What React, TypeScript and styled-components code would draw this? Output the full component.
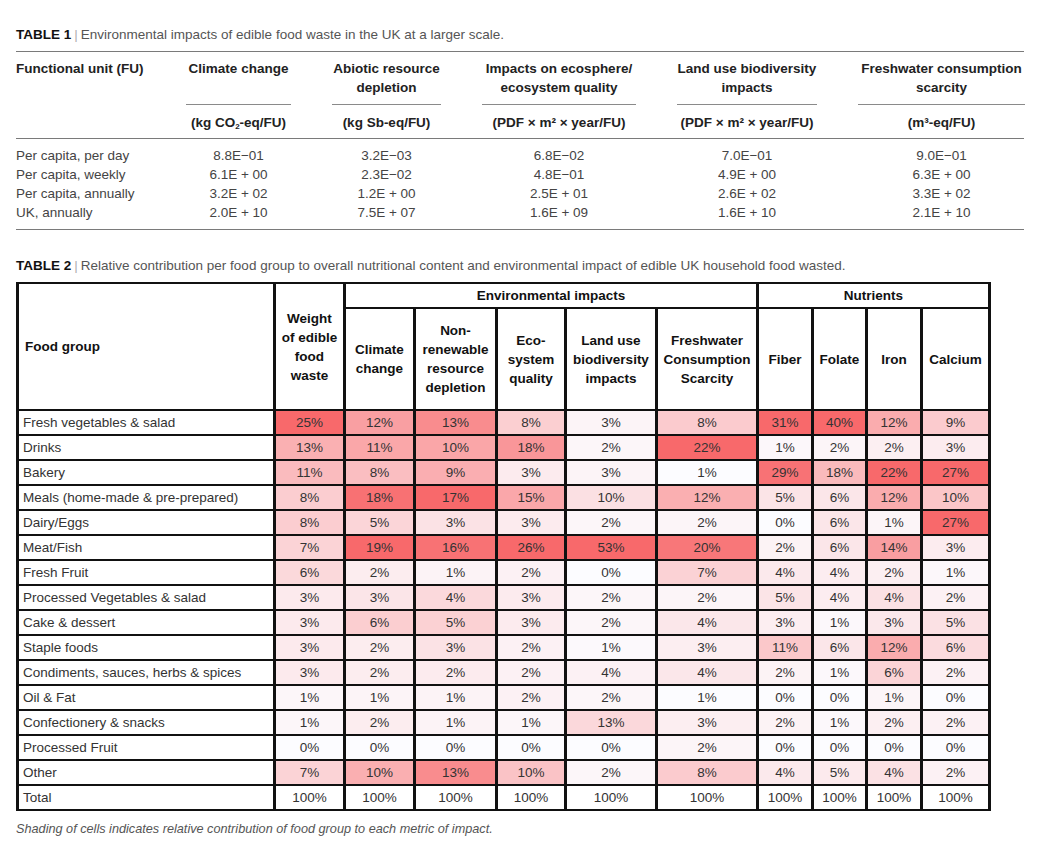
import React from "react";
import styled, { createGlobalStyle } from "styled-components";

const Global = createGlobalStyle`
  html, body { margin: 0; padding: 0; background: #fff; }
  body { font-family: "Liberation Sans", Arial, Helvetica, sans-serif; color: #333; }
`;

const Page = styled.div`
  padding: 27px 0 0 16px;
  width: 1031px;
  box-sizing: border-box;
`;

const Title = styled.div<{ $mb: number; $mt?: number }>`
  font-size: 13.5px;
  line-height: 16px;
  color: #555;
  margin-top: ${(p) => p.$mt ?? 0}px;
  margin-bottom: ${(p) => p.$mb}px;
  white-space: nowrap;
  b { color: #111; font-weight: 700; }
`;

const Sep = styled.span`
  color: #b0b0b0;
  margin: 0 3px;
`;

const T1 = styled.div`
  width: 1008px;
`;

const Rule = styled.div`
  height: 1px;
  background: #7a7a7a;
`;

const T1Grid = styled.div<{ $pt: number; $pb: number }>`
  display: grid;
  grid-template-columns: 129px 105px 109px 154px 140px 167px;
  column-gap: 41px;
  padding: ${(p) => p.$pt}px 0 ${(p) => p.$pb}px;
  font-size: 13.5px;
  line-height: 19px;
`;

const T1Head = styled.div<{ $underline?: boolean; $left?: boolean }>`
  font-weight: 700;
  color: #222;
  text-align: ${(p) => (p.$left ? "left" : "center")};
  white-space: nowrap;
  padding-bottom: ${(p) => (p.$underline ? 7 : 0)}px;
  border-bottom: ${(p) => (p.$underline ? "1px solid #8a8a8a" : "none")};
`;

const T1Cell = styled.div<{ $left?: boolean }>`
  color: #444;
  text-align: ${(p) => (p.$left ? "left" : "center")};
  white-space: nowrap;
`;

const Sub = styled.sub`
  font-size: 8px;
  vertical-align: -2px;
  line-height: 0;
`;

const T2 = styled.div`
  display: grid;
  width: 975px;
  box-sizing: border-box;
  grid-template-columns: 254px 67px 67px 79px 66px 88px 98px 52px 51px 52px 65px;
  grid-template-rows: 23px 100px repeat(16, 23px);
  column-gap: 3px;
  row-gap: 2px;
  padding: 2px 3px;
  background: #111;
  font-size: 13.5px;
`;

const HeadCell = styled.div<{ $rows?: number; $cols?: number; $left?: boolean }>`
  grid-row: span ${(p) => p.$rows ?? 1};
  grid-column: span ${(p) => p.$cols ?? 1};
  background: #fff;
  display: flex;
  align-items: center;
  justify-content: ${(p) => (p.$left ? "flex-start" : "center")};
  padding-left: ${(p) => (p.$left ? 6 : 0)}px;
  text-align: center;
  font-weight: 700;
  color: #111;
  line-height: 19px;
  white-space: nowrap;
`;

const LabelCell = styled.div`
  background: #fff;
  display: flex;
  align-items: center;
  padding-left: 4px;
  color: #333;
  white-space: nowrap;
`;

const ValueCell = styled.div<{ $bg: string }>`
  background: ${(p) => p.$bg};
  display: flex;
  align-items: center;
  justify-content: center;
  color: #333;
  white-space: nowrap;
`;

const Caption = styled.div`
  margin-top: 10px;
  font-size: 12.7px;
  line-height: 16px;
  font-style: italic;
  color: #555;
`;

const t1Rows: [string, string[]][] = [
  ["Per capita, per day", ["8.8E\u221201", "3.2E\u221203", "6.8E\u221202", "7.0E\u221201", "9.0E\u221201"]],
  ["Per capita, weekly", ["6.1E + 00", "2.3E\u221202", "4.8E\u221201", "4.9E + 00", "6.3E + 00"]],
  ["Per capita, annually", ["3.2E + 02", "1.2E + 00", "2.5E + 01", "2.6E + 02", "3.3E + 02"]],
  ["UK, annually", ["2.0E + 10", "7.5E + 07", "1.6E + 09", "1.6E + 10", "2.1E + 10"]],
];

const t2Rows: [string, number[]][] = [
  ["Fresh vegetables & salad", [25, 12, 13, 8, 3, 8, 31, 40, 12, 9]],
  ["Drinks", [13, 11, 10, 18, 2, 22, 1, 2, 2, 3]],
  ["Bakery", [11, 8, 9, 3, 3, 1, 29, 18, 22, 27]],
  ["Meals (home-made & pre-prepared)", [8, 18, 17, 15, 10, 12, 5, 6, 12, 10]],
  ["Dairy/Eggs", [8, 5, 3, 3, 2, 2, 0, 6, 1, 27]],
  ["Meat/Fish", [7, 19, 16, 26, 53, 20, 2, 6, 14, 3]],
  ["Fresh Fruit", [6, 2, 1, 2, 0, 7, 4, 4, 2, 1]],
  ["Processed Vegetables & salad", [3, 3, 4, 3, 2, 2, 5, 4, 4, 2]],
  ["Cake & dessert", [3, 6, 5, 3, 2, 4, 3, 1, 3, 5]],
  ["Staple foods", [3, 2, 3, 2, 1, 3, 11, 6, 12, 6]],
  ["Condiments, sauces, herbs & spices", [3, 2, 2, 2, 4, 4, 2, 1, 6, 2]],
  ["Oil & Fat", [1, 1, 1, 2, 2, 1, 0, 0, 1, 0]],
  ["Confectionery & snacks", [1, 2, 1, 1, 13, 3, 2, 1, 2, 2]],
  ["Processed Fruit", [0, 0, 0, 0, 0, 2, 0, 0, 0, 0]],
  ["Other", [7, 10, 13, 10, 2, 8, 4, 5, 4, 2]],
];

const colMin = Array.from({ length: 10 }, (_, i) => Math.min(...t2Rows.map((r) => r[1][i])));
const colMax = Array.from({ length: 10 }, (_, i) => Math.max(...t2Rows.map((r) => r[1][i])));

const shade = (v: number, i: number) => {
  const t = colMax[i] === colMin[i] ? 0 : (v - colMin[i]) / (colMax[i] - colMin[i]);
  const r = Math.round(252 - 4 * t);
  const g = Math.round(252 - 147 * t);
  const b = Math.round(255 - 148 * t);
  return `rgb(${r}, ${g}, ${b})`;
};

const subHeads: React.ReactNode[] = [
  <>Climate<br />change</>,
  <>Non-<br />renewable<br />resource<br />depletion</>,
  <>Eco-<br />system<br />quality</>,
  <>Land use<br />biodiversity<br />impacts</>,
  <>Freshwater<br />Consumption<br />Scarcity</>,
  <>Fiber</>,
  <>Folate</>,
  <>Iron</>,
  <>Calcium</>,
];

export default function App() {
  return (
    <Page>
      <Global />
      <Title $mb={8}>
        <b>TABLE 1</b>
        <Sep>|</Sep>Environmental impacts of edible food waste in the UK at a larger scale.
      </Title>
      <T1>
        <Rule />
        <T1Grid $pt={7} $pb={0}>
          <T1Head $left>Functional unit (FU)</T1Head>
          <T1Head $underline>Climate change</T1Head>
          <T1Head $underline>Abiotic resource<br />depletion</T1Head>
          <T1Head $underline>Impacts on ecosphere/<br />ecosystem quality</T1Head>
          <T1Head $underline>Land use biodiversity<br />impacts</T1Head>
          <T1Head $underline>Freshwater consumption<br />scarcity</T1Head>
        </T1Grid>
        <T1Grid $pt={8} $pb={6}>
          <T1Head $left />
          <T1Head>(kg CO<Sub>2</Sub>-eq/FU)</T1Head>
          <T1Head>(kg Sb-eq/FU)</T1Head>
          <T1Head>(PDF × m² × year/FU)</T1Head>
          <T1Head>(PDF × m² × year/FU)</T1Head>
          <T1Head>(m³-eq/FU)</T1Head>
        </T1Grid>
        <Rule />
        <T1Grid $pt={7} $pb={7}>
          {t1Rows.map(([label, vals]) => (
            <React.Fragment key={label}>
              <T1Cell $left>{label}</T1Cell>
              {vals.map((v, i) => (
                <T1Cell key={i}>{v}</T1Cell>
              ))}
            </React.Fragment>
          ))}
        </T1Grid>
        <Rule />
      </T1>

      <Title $mt={28} $mb={8}>
        <b>TABLE 2</b>
        <Sep>|</Sep>Relative contribution per food group to overall nutritional content and environmental impact of edible UK household food wasted.
      </Title>
      <T2>
        <HeadCell $rows={2} $left>Food group</HeadCell>
        <HeadCell $rows={2}>
          Weight<br />of edible<br />food<br />waste
        </HeadCell>
        <HeadCell $cols={5}>Environmental impacts</HeadCell>
        <HeadCell $cols={4}>Nutrients</HeadCell>
        {subHeads.map((h, i) => (
          <HeadCell key={i}>
            <div>{h}</div>
          </HeadCell>
        ))}
        {t2Rows.map(([label, vals]) => (
          <React.Fragment key={label}>
            <LabelCell>{label}</LabelCell>
            {vals.map((v, i) => (
              <ValueCell key={i} $bg={shade(v, i)}>
                {v}%
              </ValueCell>
            ))}
          </React.Fragment>
        ))}
        <LabelCell>Total</LabelCell>
        {Array.from({ length: 10 }, (_, i) => (
          <ValueCell key={i} $bg="#fff">
            100%
          </ValueCell>
        ))}
      </T2>
      <Caption>Shading of cells indicates relative contribution of food group to each metric of impact.</Caption>
    </Page>
  );
}
